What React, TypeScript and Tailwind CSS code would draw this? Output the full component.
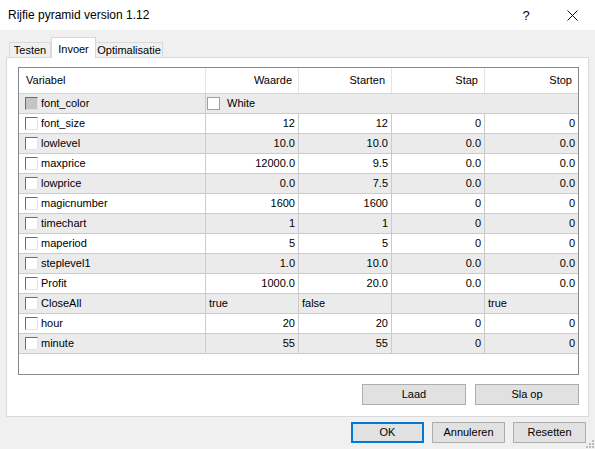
import React from "react";

type Row = { name: string; vals: string[]; left?: boolean };

const rows: Row[] = [
  { name: "font_size", vals: ["12", "12", "0", "0"] },
  { name: "lowlevel", vals: ["10.0", "10.0", "0.0", "0.0"] },
  { name: "maxprice", vals: ["12000.0", "9.5", "0.0", "0.0"] },
  { name: "lowprice", vals: ["0.0", "7.5", "0.0", "0.0"] },
  { name: "magicnumber", vals: ["1600", "1600", "0", "0"] },
  { name: "timechart", vals: ["1", "1", "0", "0"] },
  { name: "maperiod", vals: ["5", "5", "0", "0"] },
  { name: "steplevel1", vals: ["1.0", "10.0", "0.0", "0.0"] },
  { name: "Profit", vals: ["1000.0", "20.0", "0.0", "0.0"] },
  { name: "CloseAll", vals: ["true", "false", "", "true"], left: true },
  { name: "hour", vals: ["20", "20", "0", "0"] },
  { name: "minute", vals: ["55", "55", "0", "0"] },
];

const widths = ["w-[93px]", "w-[93px]", "w-[93px]", "flex-1"];

function Check({ disabled }: { disabled?: boolean }) {
  return (
    <span
      className={
        "block w-[13px] h-[13px] shrink-0 border border-t-[#6d6d6d] border-l-[#6d6d6d] border-r-[#e3e3e3] border-b-[#e3e3e3] " +
        (disabled ? "bg-[#c4c4c4]" : "bg-white")
      }
    />
  );
}

function Btn({ label, w, primary }: { label: string; w: string; primary?: boolean }) {
  return (
    <div
      className={
        "h-[21px] flex items-center justify-center bg-[#e1e1e1] text-[11px] text-black " +
        w +
        (primary ? " border-2 border-[#0078d7]" : " border border-[#adadad]")
      }
    >
      {label}
    </div>
  );
}

export default function App() {
  return (
    <div
      className="w-[595px] h-[449px] bg-[#f0f0f0] flex flex-col overflow-hidden text-black relative"
      style={{ fontFamily: '"Liberation Sans", Arial, sans-serif' }}
    >
      {/* Title bar */}
      <div className="h-[30px] bg-white flex items-center pl-[8px] shrink-0">
        <span className="text-[12px] flex-1 leading-none">Rijfie pyramid version 1.12</span>
        <span className="text-[13px] w-[46px] text-center leading-none">?</span>
        <div className="w-[46px] flex items-center justify-center">
          <svg width="11" height="11" viewBox="0 0 11 11">
            <path d="M0.5 0.5 L10.5 10.5 M10.5 0.5 L0.5 10.5" stroke="#111" strokeWidth="1" />
          </svg>
        </div>
      </div>

      <div className="flex-1 flex flex-col px-[6px]">
        {/* Tabs */}
        <div className="h-[27px] flex items-end pl-[3px] relative z-10 shrink-0 text-[11px]">
          <div className="h-[15px] w-[42px] border border-b-0 border-[#d9d9d9] bg-[#f0f0f0] flex items-center justify-center">
            Testen
          </div>
          <div className="h-[21px] w-[45px] -mb-px border border-b-0 border-[#d9d9d9] bg-white flex items-start pt-[3px] justify-center">
            Invoer
          </div>
          <div className="h-[15px] w-[67px] border border-b-0 border-l-0 border-[#d9d9d9] bg-[#f0f0f0] flex items-center justify-center">
            Optimalisatie
          </div>
        </div>

        {/* Panel */}
        <div className="h-[360px] w-[583px] border border-[#d9d9d9] bg-white pl-[11px] pr-[9px] pt-[9px] flex flex-col shrink-0">
          <div className="h-[308px] border border-[#828790] flex flex-col text-[11px]">
            {/* header */}
            <div className="h-[26px] flex border-b border-[#d5d5d5] shrink-0">
              <div className="w-[187px] border-r border-[#e5e5e5] flex items-center pl-[7px]">Variabel</div>
              {["Waarde", "Starten", "Stap", "Stop"].map((h, i) => (
                <div
                  key={h}
                  className={
                    widths[i] +
                    (i < 3 ? " border-r border-[#e5e5e5]" : "") +
                    " flex items-center justify-end pr-[6px]"
                  }
                >
                  {h}
                </div>
              ))}
            </div>

            {/* font_color row */}
            <div className="h-[20px] flex border-b border-[#cbcbcb] bg-[#ebebeb] shrink-0">
              <div className="w-[187px] border-r border-[#cbcbcb] flex items-center pl-[6px] gap-[3px]">
                <Check disabled />
                <span>font_color</span>
              </div>
              <div className="flex-1 flex items-center pl-[1px] gap-[7px]">
                <span className="block w-[13px] h-[13px] border border-[#a0a0a0] bg-white" />
                <span>White</span>
              </div>
            </div>

            {rows.map((r, idx) => (
              <div
                key={r.name}
                className={
                  "h-[20px] flex border-b border-[#cbcbcb] shrink-0 " +
                  (idx % 2 === 1 ? "bg-[#ebebeb]" : "bg-white")
                }
              >
                <div className="w-[187px] border-r border-[#cbcbcb] flex items-center pl-[6px] gap-[3px]">
                  <Check />
                  <span>{r.name}</span>
                </div>
                {r.vals.map((v, i) => (
                  <div
                    key={i}
                    className={
                      widths[i] +
                      (i < 3 ? " border-r border-[#cbcbcb]" : "") +
                      " flex items-center " +
                      (r.left ? "justify-start pl-[3px]" : "justify-end pr-[3px]")
                    }
                  >
                    {v}
                  </div>
                ))}
              </div>
            ))}
            <div className="flex-1 bg-white" />
          </div>

          <div className="flex justify-end gap-[9px] mt-[9px]">
            <Btn label="Laad" w="w-[104px]" />
            <Btn label="Sla op" w="w-[104px]" />
          </div>
        </div>

        {/* bottom buttons */}
        <div className="flex justify-end gap-[8px] mt-[5px] pr-[3px]">
          <Btn label="OK" w="w-[73px]" primary />
          <Btn label="Annuleren" w="w-[73px]" />
          <Btn label="Resetten" w="w-[73px]" />
        </div>
      </div>

      {/* resize grip */}
      <svg className="absolute right-0 bottom-0" width="10" height="10" viewBox="0 0 10 10">
        <rect x="7" y="1" width="2" height="2" fill="#bcbcbc" />
        <rect x="4" y="4" width="2" height="2" fill="#bcbcbc" />
        <rect x="7" y="4" width="2" height="2" fill="#bcbcbc" />
        <rect x="1" y="7" width="2" height="2" fill="#bcbcbc" />
        <rect x="4" y="7" width="2" height="2" fill="#bcbcbc" />
        <rect x="7" y="7" width="2" height="2" fill="#bcbcbc" />
      </svg>
    </div>
  );
}
